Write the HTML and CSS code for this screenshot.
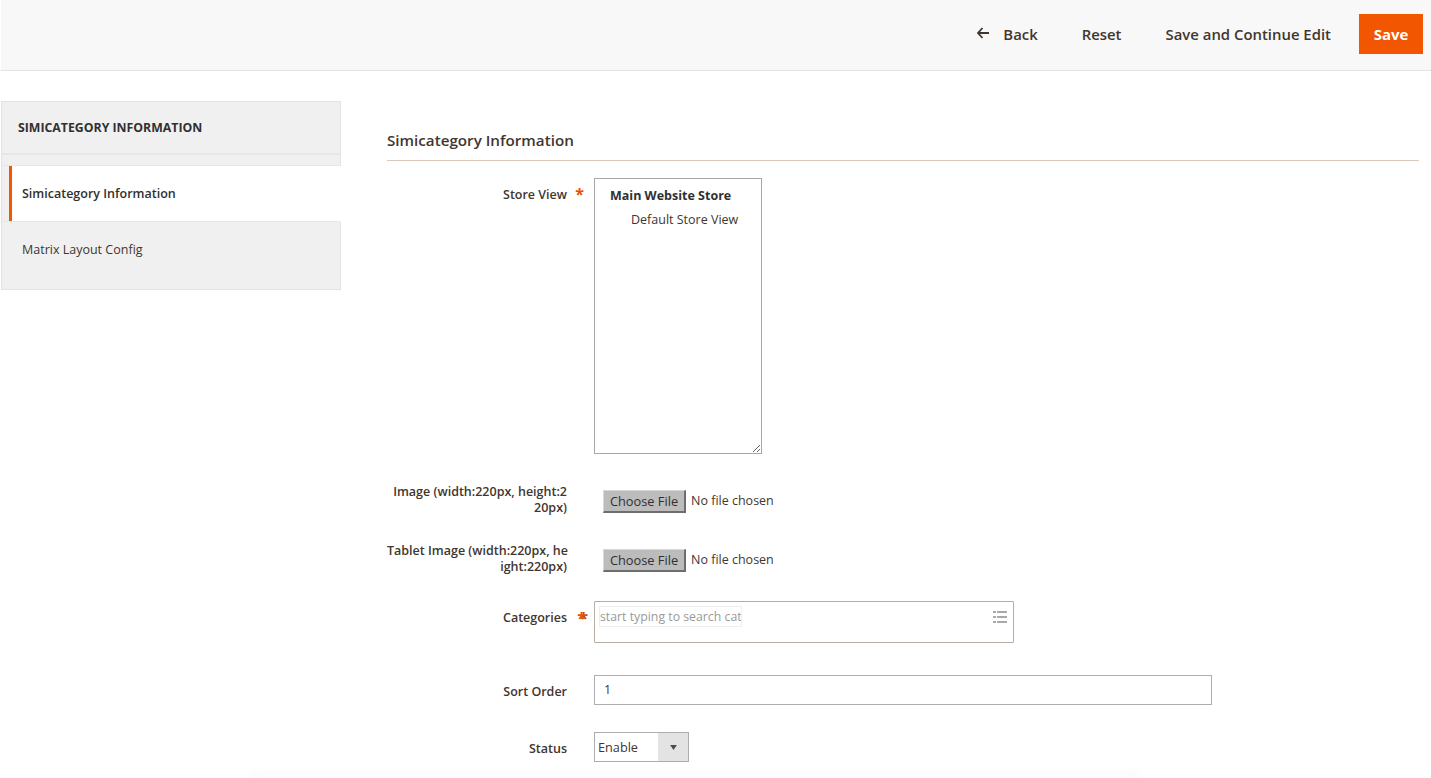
FILE: index.html
```html
<!DOCTYPE html>
<html lang="en">
<head>
<meta charset="utf-8">
<title>Simicategory Information</title>
<link rel="stylesheet" href="styles.css">
</head>
<body>
<header class="topbar">
  <a class="action back"><svg class="back-icon" width="14" height="12" viewBox="0 0 14 12"><path d="M13 6H2M6.500 1 2 6l4.500 5" fill="none" stroke="#41362f" stroke-width="1.800"/></svg>Back</a>
  <a class="action reset">Reset</a>
  <a class="action cont">Save and Continue Edit</a>
  <button class="save">Save</button>
</header>
<main class="page">
  <aside class="side">
    <div class="side-title">SIMICATEGORY INFORMATION</div>
    <div class="side-gap"></div>
    <div class="side-item active">Simicategory Information</div>
    <div class="side-item last">Matrix Layout Config</div>
  </aside>
  <section class="content">
    <h2 class="title">Simicategory Information</h2>
    <div class="row row-store">
      <label class="lab req">Store View</label>
      <div class="store">
        <div class="store-group">Main Website Store</div>
        <div class="store-view">Default Store View</div>
      </div>
    </div>
    <div class="row row-file">
      <label class="lab lab-two">Image (width:220px, height:2<br>20px)</label>
      <div class="file"><button class="file-btn">Choose File</button><span class="file-text">No file chosen</span></div>
    </div>
    <div class="row row-file2">
      <label class="lab lab-two">Tablet Image (width:220px, he<br>ight:220px)</label>
      <div class="file"><button class="file-btn">Choose File</button><span class="file-text">No file chosen</span></div>
    </div>
    <div class="row row-cat">
      <label class="lab req req-cat">Categories</label>
      <div class="cat">
        <span class="cat-input">start typing to search cat</span>
        <svg class="cat-icon" width="14" height="12" viewBox="0 0 14 12"><path d="M0 0h3v2H0zM0 5h3v2H0zM0 10h3v2H0zM4 0h10v2H4zM4 5h10v2H4zM4 10h10v2H4z" fill="#a9a9a9"/></svg>
      </div>
    </div>
    <div class="row row-sort">
      <label class="lab">Sort Order</label>
      <div class="sort">1</div>
    </div>
    <div class="row row-status">
      <label class="lab">Status</label>
      <div class="status"><span class="status-val">Enable</span><span class="status-arrow"><svg width="7" height="5" viewBox="0 0 8 6"><path d="M0 0h8L4 6z" fill="#514943"/></svg></span></div>
    </div>
  </section>
</main>
<div class="fade"></div>
</body>
</html>
```
FILE: styles.css
```css
* { box-sizing: border-box; }
html, body { margin: 0; height: 100%; overflow: hidden; }
body { font-family: "Open Sans", sans-serif; font-size: 12.500px; color: #41362f; background: #fff; line-height: 16px; }

.topbar { height: 71px; margin-left: 1px; background: #f8f8f8; border-bottom: 1px solid #e3e3e3; display: flex; align-items: center; justify-content: flex-end; padding: 0 8px 2px 0; }
.action { font-size: 14.900px; font-weight: 600; color: #41362f; white-space: nowrap; }
.back { display: flex; align-items: center; margin-right: 44px; }
.back-icon { margin-right: 13px; margin-top: -2px; }
.reset { margin-right: 44px; }
.cont { margin-right: 28px; }
.save { width: 64px; height: 40px; border: 0; padding: 0; background: #f25600; color: #fff; font: 700 15px "Open Sans", sans-serif; }

.page { display: flex; align-items: flex-start; padding: 30px 12px 0 1px; }
.side { width: 340px; flex: none; border: 1px solid #e3e3e3; background: #f0f0f0; }
.side-title { height: 53px; padding: 18px 16px 0; font-size: 12.300px; font-weight: 700; color: #303030; border-bottom: 2px solid #e6e6e6; line-height: 16px; }
.side-gap { height: 11px; border-bottom: 1px solid #e6e6e6; }
.side-item { padding-left: 20px; }
.active { margin: 0 -1px 0 7px; padding: 20px 0 0 10px; height: 56px; background: #fff; border-left: 3px solid #f25600; font-weight: 600; color: #303030; }
.last { height: 68px; padding-top: 20px; color: #41362f; border-top: 1px solid #e6e6e6; margin-top: -1px; }

.content { flex: 1; margin-left: 46px; padding-top: 29px; }
.title { margin: 0 0 17px; height: 31px; font-size: 15.200px; line-height: 20px; font-weight: 600; color: #41362f; border-bottom: 1px solid #dcc8bb; }

.row { display: grid; grid-template-columns: 180px 1fr; column-gap: 27px; align-items: start; }
.lab { text-align: right; font-weight: 600; color: #41362f; position: relative; white-space: nowrap; }
.req::after { content: "*"; position: absolute; right: -17px; top: 6px; color: #eb5202; font-size: 16px; line-height: 20px; font-weight: 700; }
.req-cat::after { right: -19px; top: 7px; text-shadow: 2px 0 0 #b14a10; }
.lab-two { line-height: 15.500px; }

.row-store .lab { padding-top: 9px; }
.store { width: 168px; height: 276px; border: 1px solid #a6a6a6; background: #fff; padding: 9px 0 0 15px; overflow: hidden; resize: both; }
.store-group { font-weight: 700; color: #303030; margin-bottom: 8px; }
.store-view { padding-left: 21px; color: #41362f; }

.row-file { margin-top: 30px; }
.row-file2 { margin-top: 28px; }
.file { display: flex; align-items: center; padding: 0 0 0 9px; height: 23px; margin-top: 6px; }
.file-btn { width: 83px; height: 23px; padding: 0 0 1px; background: #bcbcbc; border: 1px solid #bcbcbc; border-right: 2px solid #6e6e6e; border-bottom: 2px solid #6e6e6e; border-top-color: #d8d8d8; border-left-color: #d8d8d8; font: 12.800px/16px "Open Sans", sans-serif; color: #303030; }
.file-text { margin-left: 5px; margin-top: -1px; color: #41362f; }

.row-cat { margin-top: 27px; }
.row-cat .lab { padding-top: 9px; }
.cat { width: 420px; height: 42px; border: 1px solid #b5aea6; border-radius: 1px; position: relative; padding: 4px; }
.cat-input { display: block; width: 143px; height: 21px; border: 1px solid #eee; padding: 1px 0 0 0; overflow: hidden; white-space: nowrap; font-size: 12.300px; line-height: 17px; color: #9a9a9a; }
.cat-icon { position: absolute; right: 6px; top: 9px; }

.row-sort { margin-top: 32px; }
.row-sort .lab { padding-top: 9px; }
.sort { width: 618px; height: 30px; border: 1px solid #adadad; padding: 6px 0 0 9px; }

.row-status { margin-top: 27px; }
.row-status .lab { padding-top: 9px; }
.status { width: 95px; height: 30px; border: 1px solid #adadad; display: flex; }
.status-val { flex: 1; padding: 6px 0 0 3px; font-size: 12.700px; }
.status-arrow { width: 30px; background: #e3e3e3; display: flex; align-items: center; justify-content: center; }

.fade { position: fixed; left: 250px; width: 890px; bottom: 0; height: 8px; background: #fbfbfb; filter: blur(3px); }
```
